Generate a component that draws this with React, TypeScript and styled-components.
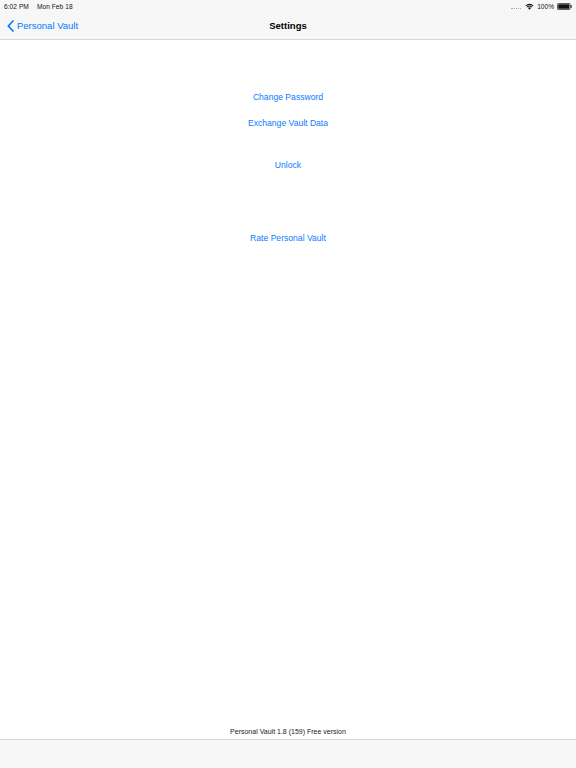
import React from 'react'
import styled, { createGlobalStyle } from 'styled-components'

const GlobalStyle = createGlobalStyle`
  html, body {
    margin: 0;
    padding: 0;
    background: #fff;
  }
  body {
    font-family: "Liberation Sans", Arial, sans-serif;
  }
`

const Screen = styled.div`
  width: 576px;
  height: 768px;
  display: flex;
  flex-direction: column;
  background: #fff;
  overflow: hidden;
`

const Header = styled.header`
  background: #f7f7f7;
  border-bottom: 1px solid #d6d6d6;
  height: 39px;
  display: flex;
  flex-direction: column;
`

const StatusBar = styled.div`
  height: 12px;
  padding: 0 4px;
  display: flex;
  align-items: center;
  justify-content: space-between;
  font-size: 6.6px;
  font-weight: 500;
  color: #111;
`

const StatusLeft = styled.div`
  display: flex;
  gap: 8px;
  letter-spacing: 0.05px;
`

const StatusRight = styled.div`
  display: flex;
  align-items: center;
  gap: 3px;
`

const Signal = styled.span`
  width: 10px;
  height: 1px;
  border-bottom: 1px dotted #aaa;
  margin-top: 3px;
  margin-right: 1px;
`

const NavBar = styled.nav`
  flex: 1;
  display: grid;
  grid-template-columns: 1fr auto 1fr;
  align-items: center;
  padding: 0 7px;
`

const BackButton = styled.div`
  display: flex;
  align-items: center;
  gap: 3px;
  color: #007aff;
  font-size: 9.5px;
`

const Title = styled.div`
  font-size: 9.5px;
  font-weight: 700;
  color: #000;
`

const Content = styled.main`
  flex: 1;
  display: flex;
  flex-direction: column;
  align-items: center;
  padding-top: 44px;
`

const Group = styled.div<{ $gap: number }>`
  display: flex;
  flex-direction: column;
  align-items: center;
  margin-top: ${(p) => p.$gap}px;
`

const LinkButton = styled.div`
  height: 26px;
  display: flex;
  align-items: center;
  color: #0a7cff;
  font-size: 8.6px;
`

const Version = styled.div`
  text-align: center;
  font-size: 7px;
  color: #222;
  height: 13px;
  line-height: 13px;
  margin-bottom: 1px;
`

const Toolbar = styled.footer`
  height: 28px;
  background: #f7f7f7;
  border-top: 1px solid #d6d6d6;
`

const Wifi = () => (
  <svg width="9" height="7" viewBox="0 0 18 13">
    <path d="M9 13 L6 9.5 A4.5 4.5 0 0 1 12 9.5 Z" fill="#111" />
    <path d="M3.6 7 A7.5 7.5 0 0 1 14.4 7 L12.9 8.6 A5.5 5.5 0 0 0 5.1 8.6 Z" fill="#111" />
    <path d="M1 4.3 A11.5 11.5 0 0 1 17 4.3 L15.5 5.9 A9.3 9.3 0 0 0 2.5 5.9 Z" fill="#111" />
  </svg>
)

const Battery = () => (
  <svg width="15" height="7" viewBox="0 0 30 14">
    <rect x="0.75" y="0.75" width="25.5" height="12.5" rx="2.5" fill="none" stroke="#111" strokeWidth="1.5" />
    <rect x="2.5" y="2.5" width="22" height="9" rx="1" fill="#111" />
    <path d="M27.5 4.5 h1 a1 1 0 0 1 1 1 v3 a1 1 0 0 1 -1 1 h-1 Z" fill="#111" />
  </svg>
)

const Chevron = () => (
  <svg width="7" height="12" viewBox="0 0 7 12">
    <path d="M6 1 L1.3 6 L6 11" fill="none" stroke="#007aff" strokeWidth="1.7" strokeLinecap="round" strokeLinejoin="round" />
  </svg>
)

const App = () => (
  <>
    <GlobalStyle />
    <Screen>
      <Header>
        <StatusBar>
          <StatusLeft>
            <span>6:02 PM</span>
            <span>Mon Feb 18</span>
          </StatusLeft>
          <StatusRight>
            <Signal />
            <Wifi />
            <span>100%</span>
            <Battery />
          </StatusRight>
        </StatusBar>
        <NavBar>
          <BackButton>
            <Chevron />
            <span>Personal Vault</span>
          </BackButton>
          <Title>Settings</Title>
          <div />
        </NavBar>
      </Header>
      <Content>
        <Group $gap={0}>
          <LinkButton>Change Password</LinkButton>
          <LinkButton>Exchange Vault Data</LinkButton>
        </Group>
        <Group $gap={15.5}>
          <LinkButton>Unlock</LinkButton>
        </Group>
        <Group $gap={47.5}>
          <LinkButton>Rate Personal Vault</LinkButton>
        </Group>
      </Content>
      <Version>Personal Vault 1.8 (159) Free version</Version>
      <Toolbar />
    </Screen>
  </>
)

export default App
